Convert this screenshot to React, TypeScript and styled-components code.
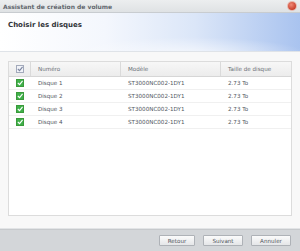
import React from "react"
import styled, {createGlobalStyle} from "styled-components"

const Global = createGlobalStyle`
  html, body { margin: 0; padding: 0; }
  body {
    width: 300px;
    height: 251px;
    overflow: hidden;
    font-family: Verdana, "DejaVu Sans", sans-serif;
    background: #f6f7f8;
  }
`

const Window = styled.div`
  width: 300px;
  height: 251px;
  display: flex;
  flex-direction: column;
  background: #f7f7f7;
`

const TitleBar = styled.div`
  height: 12px;
  display: flex;
  align-items: center;
  justify-content: space-between;
  padding: 0 4px 0 3px;
  background: linear-gradient(#eceeef, #dfe2e4);
  border-bottom: 1px solid #c8ccd0;
  font-size: 6px;
  font-weight: bold;
  color: #62676e;
`

const Close = styled.span`
  width: 8px;
  height: 8px;
  border-radius: 50%;
  background: radial-gradient(circle at 40% 35%, #f08a78, #c9402c 70%);
  box-shadow: 0 0 0 1px #e9b8ad;
`

const Header = styled.div`
  height: 39px;
  padding: 8px 8px 0;
  box-sizing: border-box;
  background:
    radial-gradient(ellipse 120px 18px at 190px 42px, rgba(255,255,255,0.7), rgba(255,255,255,0)),
    linear-gradient(90deg, #ffffff 0%, #f4f7fd 35%, #dbe6f8 65%, #a9c3ef 100%);
  border-bottom: 1px solid #dfe3e8;
  font-size: 7px;
  font-weight: bold;
  color: #303338;
`

const Body = styled.div`
  flex: 1;
  padding: 9px 8px 12px 8px;
  background: #f8f8f8;
  border-bottom: 1px solid #e2e4e6;
`

const Grid = styled.div`
  height: 100%;
  box-sizing: border-box;
  background: #fff;
  border: 1px solid #dcdcdc;
  display: flex;
  flex-direction: column;
`

const Row = styled.div<{head?: boolean}>`
  display: grid;
  grid-template-columns: 22px 90px 100px 1fr;
  height: ${p => (p.head ? 14 : 12)}px;
  background: ${p => (p.head ? "linear-gradient(#f7f7f7, #ececec)" : "#fff")};
  border-bottom: 1px solid ${p => (p.head ? "#d6d6d6" : "#f0f0f0")};
  font-size: 5.6px;
  color: ${p => (p.head ? "#6a6f76" : "#505560")};
`

const Cell = styled.div<{sep?: boolean}>`
  display: flex;
  align-items: center;
  padding-left: 7px;
  border-right: 1px solid ${p => (p.sep ? "#dadada" : "transparent")};
  white-space: nowrap;
  overflow: hidden;
`

const CheckCell = styled.div<{sep?: boolean}>`
  display: flex;
  align-items: center;
  justify-content: center;
  border-right: 1px solid ${p => (p.sep ? "#dadada" : "transparent")};
`

const Box = styled.span<{on?: boolean}>`
  width: 6px;
  height: 6px;
  border: 1px solid ${p => (p.on ? "#3a9a3a" : "#a3aabb")};
  background: ${p => (p.on ? "#3fb04a" : "#f1f3f8")};
  display: flex;
  align-items: center;
  justify-content: center;
`

const Footer = styled.div`
  height: 21px;
  display: flex;
  align-items: center;
  justify-content: flex-end;
  gap: 8px;
  padding: 0 9px 0 0;
  background: #d3d6d9;
  border-top: 1px solid #c6c9cc;
`

const Button = styled.button<{w: number}>`
  width: ${p => p.w}px;
  height: 11px;
  padding: 0;
  border: 1px solid #aeb2b7;
  border-radius: 1px;
  background: linear-gradient(#fbfbfb, #e4e6e8);
  font-family: inherit;
  font-size: 5.6px;
  color: #50555c;
`

const Tick = ({color}: {color: string}) => (
  <svg width="7" height="6" viewBox="0 0 7 6">
    <path d="M1 3 L3 5 L6.5 0.5" fill="none" stroke={color} strokeWidth="1.3"/>
  </svg>
)

const disks = [1, 2, 3, 4].map(n => ({name: `Disque ${n}`, model: "ST3000NC002-1DY1", size: "2.73 To"}))

export default function App() {
  return (
    <Window>
      <Global/>
      <TitleBar>
        <span>Assistant de création de volume</span>
        <Close/>
      </TitleBar>
      <Header>Choisir les disques</Header>
      <Body>
        <Grid>
          <Row head>
            <CheckCell sep><Box><Tick color="#7d86a0"/></Box></CheckCell>
            <Cell sep>Numéro</Cell>
            <Cell sep>Modèle</Cell>
            <Cell>Taille de disque</Cell>
          </Row>
          {disks.map(d => (
            <Row key={d.name}>
              <CheckCell><Box on><Tick color="#fff"/></Box></CheckCell>
              <Cell>{d.name}</Cell>
              <Cell>{d.model}</Cell>
              <Cell>{d.size}</Cell>
            </Row>
          ))}
        </Grid>
      </Body>
      <Footer>
        <Button w={36}>Retour</Button>
        <Button w={40}>Suivant</Button>
        <Button w={40}>Annuler</Button>
      </Footer>
    </Window>
  )
}
